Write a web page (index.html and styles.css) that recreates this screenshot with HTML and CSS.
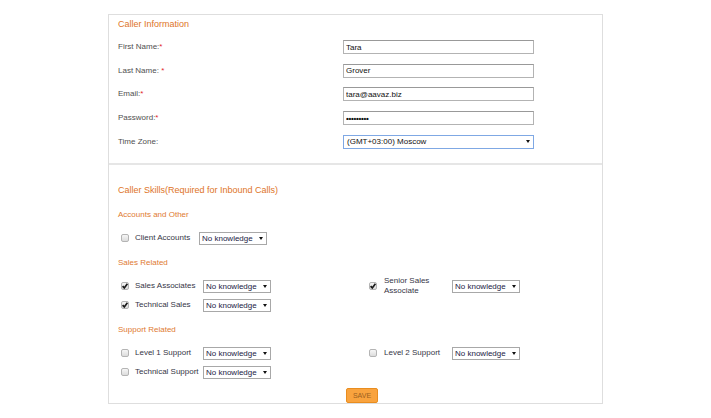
FILE: index.html
```html
<!DOCTYPE html>
<html lang="en">
<head>
    <meta charset="UTF-8">
    <meta name="viewport" content="width=device-width, initial-scale=1.0">
    <title>Caller Information</title>
    <link rel="stylesheet" href="styles.css">
</head>
<body>
    <div class="panel">
        <section class="info">
            <h2 class="title">Caller Information</h2>
            <div class="fields">
                <label>First Name:<span class="req">*</span></label>
                <input type="text" value="Tara">
                <label>Last Name: <span class="req">*</span></label>
                <input type="text" value="Grover">
                <label>Email:<span class="req">*</span></label>
                <input type="text" value="tara@aavaz.biz">
                <label>Password:<span class="req">*</span></label>
                <input type="password" value="secretpwd">
                <label>Time Zone:</label>
                <span class="pick wide"><select><option>(GMT+03:00) Moscow</option></select></span>
            </div>
        </section>

        <section class="skills">
            <h2 class="title">Caller Skills(Required for Inbound Calls)</h2>

            <div class="group">
                <h3 class="group-title">Accounts and Other</h3>
                <div class="skill-grid narrow">
                    <span class="box"></span>
                    <span class="skill-name">Client Accounts</span>
                    <span class="pick"><select><option>No knowledge</option></select></span>
                </div>
            </div>

            <div class="group">
                <h3 class="group-title">Sales Related</h3>
                <div class="skill-grid">
                    <span class="box"><svg viewBox="0 0 8 8"><path d="M1.6 4.1 L3.3 5.9 L6.4 1.8"/></svg></span>
                    <span class="skill-name">Sales Associates</span>
                    <span class="pick"><select><option>No knowledge</option></select></span>
                    <span class="box"><svg viewBox="0 0 8 8"><path d="M1.6 4.1 L3.3 5.9 L6.4 1.8"/></svg></span>
                    <span class="skill-name">Senior Sales Associate</span>
                    <span class="pick"><select><option>No knowledge</option></select></span>
                    <span class="box"><svg viewBox="0 0 8 8"><path d="M1.6 4.1 L3.3 5.9 L6.4 1.8"/></svg></span>
                    <span class="skill-name">Technical Sales</span>
                    <span class="pick"><select><option>No knowledge</option></select></span>
                </div>
            </div>

            <div class="group">
                <h3 class="group-title">Support Related</h3>
                <div class="skill-grid">
                    <span class="box"></span>
                    <span class="skill-name">Level 1 Support</span>
                    <span class="pick"><select><option>No knowledge</option></select></span>
                    <span class="box"></span>
                    <span class="skill-name">Level 2 Support</span>
                    <span class="pick"><select><option>No knowledge</option></select></span>
                    <span class="box"></span>
                    <span class="skill-name">Technical Support</span>
                    <span class="pick"><select><option>No knowledge</option></select></span>
                </div>
            </div>

            <button class="save">SAVE</button>
        </section>
    </div>
</body>
</html>
```

FILE: styles.css
```css
body {
    margin: 0;
    padding: 0;
    background: #fff;
    font-family: "Liberation Sans", Arial, sans-serif;
    font-size: 8px;
    color: #4f4f4f;
}
.panel {
    width: 493px;
    margin: 14px 0 0 108px;
    border: 1px solid #dedede;
}
.title {
    margin: 0;
    font-size: 9px;
    font-weight: normal;
    line-height: 14px;
    color: #de7428;
}
.info {
    padding: 2px 0 9.5px 9px;
    border-bottom: 2px solid #e6e6e6;
}
.info .title {
    margin-bottom: 4.5px;
}
.fields {
    display: grid;
    grid-template-columns: 225px 191px;
    grid-auto-rows: 23.6px;
    align-items: center;
}
.fields label {
    line-height: 10px;
}
.req {
    color: #e2262b;
}
.fields input {
    width: 191px;
    height: 14px;
    box-sizing: border-box;
    margin: 0;
    padding: 0 2px;
    border: 1px solid #b3b3b3;
    border-top-color: #999;
    font-family: inherit;
    font-size: 8px;
    color: #111;
    outline: none;
}
.fields input[type="password"] {
    font-weight: bold;
    letter-spacing: -0.3px;
}

.skills {
    padding: 18px 0 0 9px;
}
.skills .title {
    margin-bottom: 12px;
}
.group {
    margin-bottom: 9px;
}
.group-title {
    margin: 0 0 8px;
    font-size: 8px;
    font-weight: normal;
    line-height: 12px;
    color: #e07a32;
}
.skill-grid {
    display: grid;
    grid-template-columns: 14px 68px 166px 15px 68px 68px;
    grid-auto-rows: 19px;
    align-items: center;
    padding-left: 3px;
}
.skill-grid.narrow {
    grid-template-columns: 14px 64px 68px;
}
.box {
    width: 8px;
    height: 8px;
    box-sizing: border-box;
    border: 1px solid #b4b4b4;
    border-radius: 2px;
    background: linear-gradient(#f6f6f6, #dcdcdc);
    position: relative;
}
.box svg {
    position: absolute;
    left: -1px;
    top: -1px;
    width: 8px;
    height: 8px;
    fill: none;
    stroke: #1a1a1a;
    stroke-width: 1.7;
}
.skill-name {
    line-height: 10px;
    color: #363646;
}

.pick {
    position: relative;
    display: inline-block;
    width: 68px;
    height: 13px;
}
.pick select {
    appearance: none;
    -webkit-appearance: none;
    width: 100%;
    height: 100%;
    box-sizing: border-box;
    margin: 0;
    padding: 0 0 0 2px;
    border: 1px solid #a8a8a8;
    border-radius: 0;
    background: #fff;
    font-family: inherit;
    font-size: 8px;
    color: #222244;
    outline: none;
}
.pick::after {
    content: "";
    position: absolute;
    right: 4px;
    top: 5px;
    border-left: 2.5px solid transparent;
    border-right: 2.5px solid transparent;
    border-top: 3.5px solid #111;
    pointer-events: none;
}
.pick.wide {
    width: 191px;
    height: 14px;
}
.pick.wide select {
    border-color: #7fa8e4;
    color: #111;
    padding-left: 3px;
}

.save {
    display: block;
    width: 32px;
    height: 15px;
    margin: -3px 0 0 228px;
    padding: 0;
    border: 1px solid #e98d1f;
    border-radius: 2px;
    background: #f9a33e;
    font-family: inherit;
    font-size: 7px;
    color: #9c6120;
    cursor: pointer;
}
```
